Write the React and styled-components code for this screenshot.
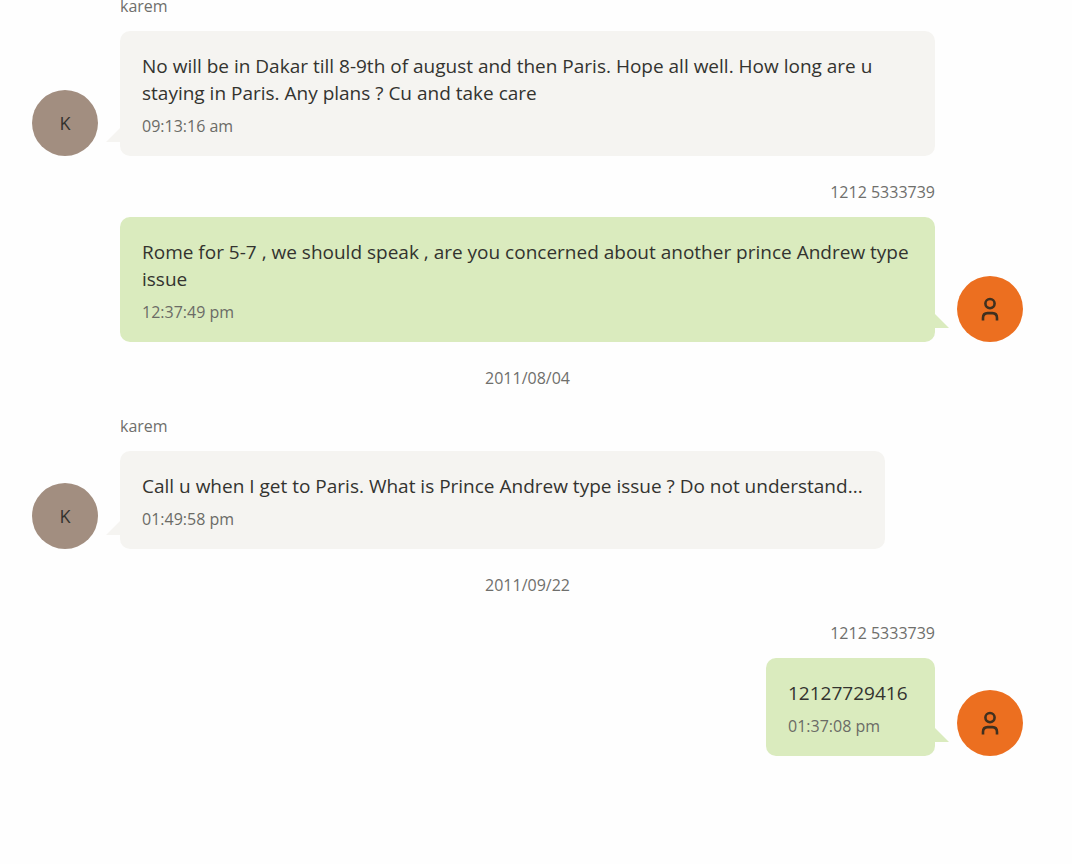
import React from "react";
import styled, { createGlobalStyle } from "styled-components";

const GlobalStyle = createGlobalStyle`
  *, *::before, *::after { box-sizing: border-box; }
  body {
    margin: 0;
    background: #fefefe;
    color: #33332f;
    font-family: "Open Sans", sans-serif;
  }
  #root { overflow: hidden; }
`;

const Conversation = styled.main`
  display: flex;
  flex-direction: column;
  gap: 24px;
  margin-top: -6px;
  padding: 0 49px 32px 32px;
`;

const Message = styled.article`
  display: grid;
  grid-template-columns: 66px minmax(0, 1fr) 66px;
  column-gap: 22px;
  align-items: end;
`;

const Column = styled.div`
  grid-column: 2;
  grid-row: 1;
  display: flex;
  flex-direction: column;
  align-items: ${(p) => (p.$own ? "flex-end" : "flex-start")};
  gap: 13px;
`;

const Sender = styled.div`
  font-size: 16px;
  line-height: 24px;
  color: #6f6f6c;
`;

const DateLabel = styled.time`
  text-align: center;
  font-size: 16px;
  line-height: 24px;
  color: #6f6f6c;
`;

const Bubble = styled.div`
  position: relative;
  min-width: 169px;
  max-width: 100%;
  padding: 22px 22px 18px;
  border-radius: 10px;
  background: ${(p) => (p.$own ? "#daebbe" : "#f5f4f1")};

  &::after {
    content: "";
    position: absolute;
    bottom: 14px;
    ${(p) => (p.$own ? "left" : "right")}: 100%;
    width: 14px;
    height: 14px;
    background: inherit;
    clip-path: ${(p) =>
      p.$own
        ? "polygon(0 0, 100% 100%, 0 100%)"
        : "polygon(100% 0, 100% 100%, 0 100%)"};
  }
`;

const Text = styled.p`
  margin: 0 0 7px;
  font-size: 19px;
  line-height: 27px;
`;

const Time = styled.time`
  display: block;
  font-size: 16px;
  line-height: 24px;
  color: #6b6b66;
`;

const Avatar = styled.div`
  grid-column: ${(p) => (p.$own ? 3 : 1)};
  grid-row: 1;
  display: flex;
  align-items: center;
  justify-content: center;
  height: 66px;
  border-radius: 50%;
  font-size: 18px;
  line-height: 24px;
  background: ${(p) => (p.$own ? "#ec6f20" : "#a28e80")};
`;

function PersonIcon() {
  return (
    <svg width="18" height="24" viewBox="0 0 18 24" fill="none" stroke="#40301f" strokeWidth="2.6" aria-hidden="true">
      <circle cx="9" cy="6.6" r="4.6" />
      <path d="M2 23.6v-2.6c0-3 1.8-4.9 4.6-4.9h4.8c2.8 0 4.6 1.9 4.6 4.9v2.6" />
    </svg>
  );
}

const entries = [
  {
    sender: "karem",
    text: "No will be in Dakar till 8-9th of august and then Paris. Hope all well. How long are u staying in Paris. Any plans ? Cu and take care",
    time: "09:13:16 am",
  },
  {
    own: true,
    sender: "1212 5333739",
    text: "Rome for 5-7 , we should speak , are you concerned about another prince Andrew type issue",
    time: "12:37:49 pm",
  },
  { date: "2011/08/04" },
  {
    sender: "karem",
    text: "Call u when I get to Paris. What is Prince Andrew type issue ? Do not understand...",
    time: "01:49:58 pm",
  },
  { date: "2011/09/22" },
  { own: true, sender: "1212 5333739", text: "12127729416", time: "01:37:08 pm" },
];

export default function App() {
  return (
    <>
      <GlobalStyle />
      <Conversation>
        {entries.map((entry, i) =>
          entry.date ? (
            <DateLabel key={i}>{entry.date}</DateLabel>
          ) : (
            <Message key={i}>
              <Avatar $own={entry.own}>
                {entry.own ? <PersonIcon /> : entry.sender[0].toUpperCase()}
              </Avatar>
              <Column $own={entry.own}>
                <Sender>{entry.sender}</Sender>
                <Bubble $own={entry.own}>
                  <Text>{entry.text}</Text>
                  <Time>{entry.time}</Time>
                </Bubble>
              </Column>
            </Message>
          )
        )}
      </Conversation>
    </>
  );
}
